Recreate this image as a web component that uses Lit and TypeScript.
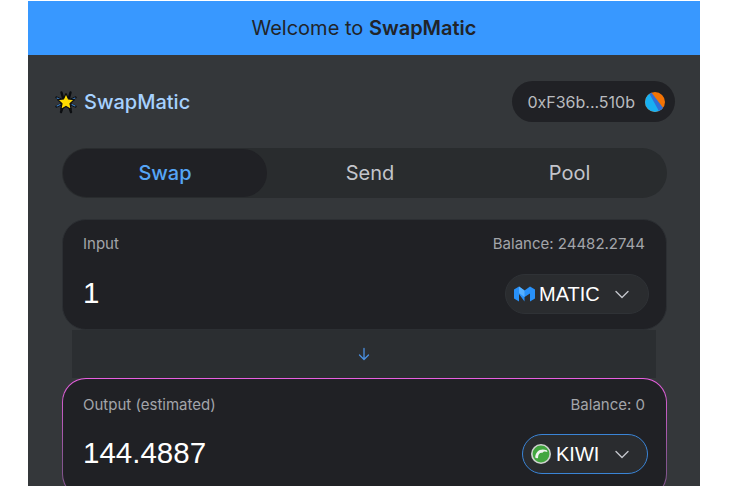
import { css, html, LitElement, svg } from 'lit';
import { customElement } from 'lit/decorators.js';

const chevron = html`<svg class="chev" width="16" height="16" viewBox="0 0 16 16" fill="none">
  <path d="M2 5.5 L8 11.5 L14 5.5" stroke="#c3c5cb" stroke-width="1.4" stroke-linecap="round" stroke-linejoin="round" />
</svg>`;

const maticIcon = html`<svg width="21" height="16" viewBox="0 0 21 16">
  <path fill="#2891f9" d="M0 3.5 L5 0.5 L10.5 4.5 L16 0.5 L21 3.5 V12.5 L16 15.5 V7.5 L10.5 11 V15.5 L5 8 V15.5 L0 12.5 Z" />
  <path fill="#56b0ff" d="M5 0.5 L10.5 4.5 V11 L5 7 Z" />
</svg>`;

const kiwiIcon = html`<svg width="20" height="20" viewBox="0 0 20 20">
  <circle cx="10" cy="10" r="10" fill="#cfd3cf" />
  <circle cx="10" cy="10" r="8.4" fill="#42a63f" />
  <path fill="#eef3ee" d="M4.2 13.5 C4.5 7.5 9 3.8 15.8 6.2 L16.5 8 C14 7 12.5 7.3 11.5 8.8 C9 8.2 7 10 7 14 C6 14.5 5 14.2 4.2 13.5 Z" />
</svg>`;

const logoIcon = html`<svg width="24" height="24" viewBox="0 0 24 24">
  ${svg`<g stroke="#0b0d10" stroke-width="2.4" stroke-linecap="round">
    <path d="M2.5 7.5 L21.5 16.5 M21.5 7.5 L2.5 16.5 M7.5 2.5 L9 8 M16.5 2.5 L15 8 M7 22 L9 16 M17 22 L15 16" />
  </g>
  <g stroke="#3f7fc4" stroke-width="1.1" stroke-linecap="round">
    <path d="M3 8 L6 9.5 M21 8 L18 9.5 M3 16 L6 14.5 M21 16 L18 14.5" />
  </g>
  <path fill="#ffdc00" stroke="#0b0d10" stroke-width="1.2" stroke-linejoin="round"
    d="M12 3.6 L14.5 9 L20.3 9.7 L16 13.6 L17.2 19.4 L12 16.4 L6.8 19.4 L8 13.6 L3.7 9.7 L9.5 9 Z" />`}
</svg>`;

const identicon = html`<svg width="20" height="20" viewBox="0 0 20 20">
  <defs><clipPath id="idc"><circle cx="10" cy="10" r="10" /></clipPath></defs>
  <g clip-path="url(#idc)">
    <rect width="20" height="20" fill="#f37305" />
    <path fill="#18b0f2" d="M-1 3 L4 0 L19 19 L13 21 L-1 21 Z" />
    <path fill="#2f6fd6" d="M4 1 L6 0 L19 17 L15 21 Z" />
  </g>
</svg>`;

@customElement('app-root')
export class AppRoot extends LitElement {
  static styles = css`
    :host {
      display: block;
      height: 486px;
      overflow: hidden;
      background: #fff;
      font-family: Inter, 'Liberation Sans', sans-serif;
    }
    .page {
      width: 672px;
      margin: 1px 0 0 28px;
      height: 485px;
      overflow: hidden;
      background: #34373a;
    }
    .banner {
      height: 54px;
      display: flex;
      align-items: center;
      justify-content: center;
      background: #3898ff;
      color: #212429;
      font-size: 20px;
      white-space: pre;
    }
    .banner b {
      font-weight: 600;
    }
    .header {
      display: flex;
      align-items: center;
      justify-content: space-between;
      padding: 26px 25px 0 26px;
    }
    .brand {
      display: flex;
      align-items: center;
      gap: 6px;
      color: #a6d1ff;
      font-size: 20px;
      font-weight: 500;
    }
    .wallet {
      display: flex;
      align-items: center;
      gap: 10px;
      height: 41px;
      padding: 0 10px 0 15px;
      border-radius: 21px;
      background: #202125;
      color: #b9bbbf;
      font-size: 16px;
    }
    .wallet svg {
      display: block;
    }
    .main {
      padding: 26px 33px 0 34px;
    }
    .tabs {
      display: flex;
      height: 50px;
      padding: 1px;
      box-sizing: border-box;
      border-radius: 25px;
      background: #292c2e;
      font-size: 20px;
      color: #c3c5cb;
    }
    .tab {
      display: flex;
      align-items: center;
      justify-content: center;
    }
    .tab.swap {
      width: 204px;
      border-radius: 24px;
      background: #202125;
      color: #55a5f6;
      font-weight: 500;
    }
    .tab.send {
      width: 206px;
    }
    .tab.pool {
      width: 193px;
    }
    .card {
      box-sizing: border-box;
      height: 111px;
      border-radius: 24px;
      background: #202125;
      border: 1px solid #2c2f33;
      padding: 16px 17px 0 20px;
    }
    .card.input {
      margin-top: 21px;
    }
    .card.output {
      border: 0;
      padding: 1px;
      height: 120px;
      background: linear-gradient(#e85fe0 0 2px, #84558f 70%);
    }
    .inner {
      box-sizing: border-box;
      height: 100%;
      border-radius: 23px;
      background: #202125;
      padding: 18px 19px 0 20px;
    }
    .labels {
      display: flex;
      justify-content: space-between;
      font-size: 15px;
      line-height: 16px;
      color: #a3a5aa;
      padding-right: 4px;
    }
    .output .labels {
      padding-right: 2px;
    }
    .row {
      display: flex;
      align-items: center;
      justify-content: space-between;
      margin-top: 22px;
    }
    .output .row {
      margin-top: 21px;
      margin-right: -1px;
    }
    .amount {
      color: #fff;
      font-family: 'Liberation Sans', Arial, sans-serif;
      font-size: 29.5px;
      margin-bottom: 2px;
    }
    .select {
      box-sizing: border-box;
      display: flex;
      align-items: center;
      height: 40px;
      border-radius: 20px;
      background: #2a2c2f;
      border: 1px solid #2f3236;
      color: #fff;
      font-size: 20px;
      font-family: 'Liberation Sans', Arial, sans-serif;
      padding-left: 8px;
      gap: 4px;
    }
    .select.matic {
      width: 144px;
    }
    .select.kiwi {
      width: 126px;
      gap: 5px;
      border-color: #3a84d6;
    }
    .chev {
      margin-left: 10px;
    }
    .arrow {
      height: 48px;
      margin: 0 11px 0 10px;
      display: flex;
      align-items: center;
      justify-content: center;
      background: #2b2e31;
    }
  `;

  render() {
    return html`
      <div class="page">
        <div class="banner">Welcome to <b>SwapMatic</b></div>
        <div class="header">
          <div class="brand">${logoIcon}<span>SwapMatic</span></div>
          <div class="wallet"><span>0xF36b...510b</span>${identicon}</div>
        </div>
        <div class="main">
          <div class="tabs">
            <div class="tab swap">Swap</div>
            <div class="tab send">Send</div>
            <div class="tab pool">Pool</div>
          </div>
          <div class="card input">
            <div class="labels"><span>Input</span><span>Balance: 24482.2744</span></div>
            <div class="row">
              <span class="amount">1</span>
              <div class="select matic">${maticIcon}<span>MATIC</span>${chevron}</div>
            </div>
          </div>
          <div class="arrow">
            <svg width="14" height="14" viewBox="0 0 14 14" fill="none">
              <path d="M7 1.5 V12 M2.5 8 L7 12.5 L11.5 8" stroke="#4a90e2" stroke-width="1.3" stroke-linecap="round" stroke-linejoin="round" />
            </svg>
          </div>
          <div class="card output">
            <div class="inner">
              <div class="labels"><span>Output (estimated)</span><span>Balance: 0</span></div>
              <div class="row">
                <span class="amount">144.4887</span>
                <div class="select kiwi">${kiwiIcon}<span>KIWI</span>${chevron}</div>
              </div>
            </div>
          </div>
        </div>
      </div>
    `;
  }
}
